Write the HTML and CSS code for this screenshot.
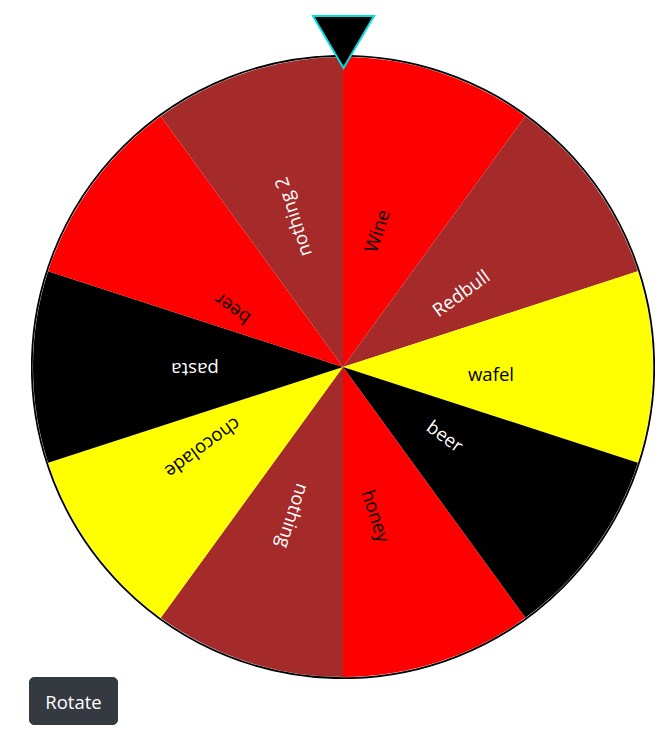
FILE: index.html
```html
<!DOCTYPE html>
<html lang="en">
<head>
<meta charset="utf-8">
<title>Wheel</title>
<link rel="stylesheet" href="styles.css">
</head>
<body>
<div class="stage">
  <svg class="pointer" width="68" height="58" viewBox="0 0 68 58">
    <polygon points="3,2 64,2 33.5,54" fill="#000" stroke="#00dede" stroke-width="2" stroke-linejoin="miter"/>
  </svg>
  <div class="wheel">
    <svg class="wheel-svg" width="624" height="624" viewBox="0 0 624 624">
      <path d="M312 312 L312 2 A310 310 0 0 1 494.21 61.20 Z" fill="#ff0000"/>
      <path d="M312 312 L494.21 61.20 A310 310 0 0 1 606.83 216.20 Z" fill="#a52a2a"/>
      <path d="M312 312 L606.83 216.20 A310 310 0 0 1 606.83 407.80 Z" fill="#ffff00"/>
      <path d="M312 312 L606.83 407.80 A310 310 0 0 1 494.21 562.80 Z" fill="#000000"/>
      <path d="M312 312 L494.21 562.80 A310 310 0 0 1 312 622 Z" fill="#ff0000"/>
      <path d="M312 312 L312 622 A310 310 0 0 1 129.79 562.80 Z" fill="#a52a2a"/>
      <path d="M312 312 L129.79 562.80 A310 310 0 0 1 17.17 407.80 Z" fill="#ffff00"/>
      <path d="M312 312 L17.17 407.80 A310 310 0 0 1 17.17 216.20 Z" fill="#000000"/>
      <path d="M312 312 L17.17 216.20 A310 310 0 0 1 129.79 61.20 Z" fill="#ff0000"/>
      <path d="M312 312 L129.79 61.20 A310 310 0 0 1 312 2 Z" fill="#a52a2a"/>
      <circle cx="312" cy="312" r="311.2" fill="none" stroke="#000" stroke-width="1.8"/>
    </svg>
    <span class="label dark l-wine">Wine</span>
    <span class="label light l-redbull">Redbull</span>
    <span class="label dark l-wafel">wafel</span>
    <span class="label light l-beer1">beer</span>
    <span class="label dark l-honey">honey</span>
    <span class="label light l-nothing">nothing</span>
    <span class="label dark l-choc">chocolade</span>
    <span class="label light l-pasta">pasta</span>
    <span class="label dark l-beer2">beer</span>
    <span class="label light l-nothing2">nothing 2</span>
  </div>
  <div class="controls">
    <button class="btn-rotate" type="button">Rotate</button>
  </div>
</div>
</body>
</html>
```

FILE: styles.css
```css
html, body {
  margin: 0;
  padding: 0;
  background: #ffffff;
}

body {
  font-family: "Open Sans", "Noto Sans", "Liberation Sans", sans-serif;
}

.stage {
  position: relative;
  padding-top: 55px;
}

.pointer {
  position: absolute;
  left: 310px;
  top: 14px;
  z-index: 2;
}

.wheel {
  position: relative;
  width: 624px;
  height: 622px;
  margin-left: 31px;
}

.wheel-svg {
  display: block;
}

.label {
  position: absolute;
  font-size: 18.6px;
  line-height: 1;
  white-space: nowrap;
}

.dark { color: #000000; }
.light { color: #ffffff; }

.l-wine     { left: 345.5px; top: 176px;   transform: translate(-50%, -50%) rotate(-72deg); }
.l-redbull  { left: 430px;   top: 237.5px; transform: translate(-50%, -50%) rotate(-36deg); }
.l-wafel    { left: 460px;   top: 319px;   transform: translate(-50%, -50%) rotate(0deg); }
.l-beer1    { left: 414px;   top: 380.5px; transform: translate(-50%, -50%) rotate(36deg); }
.l-honey    { left: 345px;   top: 461px;   transform: translate(-50%, -50%) rotate(72deg); }
.l-nothing  { left: 261.5px; top: 461px;   transform: translate(-50%, -50%) rotate(108deg); }
.l-choc     { left: 171.5px; top: 392.5px; transform: translate(-50%, -50%) rotate(144deg); }
.l-pasta    { left: 164px;   top: 314.5px; transform: translate(-50%, -50%) rotate(180deg); }
.l-beer2    { left: 201px;   top: 253.5px; transform: translate(-50%, -50%) rotate(-144deg); }
.l-nothing2 { left: 261.5px; top: 162px;   transform: translate(-50%, -50%) rotate(-108deg); }

.controls {
  padding-left: 29px;
}

.btn-rotate {
  display: inline-flex;
  align-items: center;
  justify-content: center;
  width: 89px;
  height: 48px;
  padding: 0 14px;
  font-family: "Open Sans", "Noto Sans", "Liberation Sans", sans-serif;
  font-size: 18.5px;
  color: #ffffff;
  background: #343a40;
  border: 1px solid #343a40;
  border-radius: 5px;
  cursor: pointer;
}
```
